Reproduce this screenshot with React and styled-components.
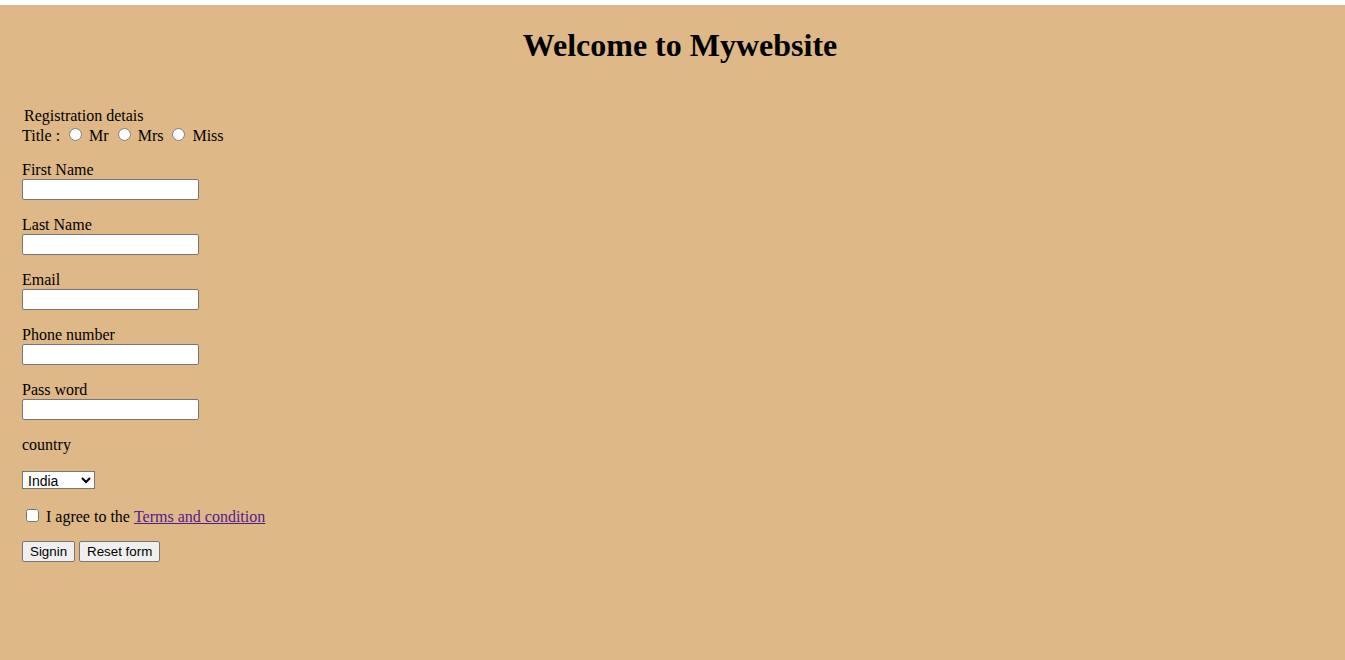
import React from "react";
import styled, { createGlobalStyle } from "styled-components";

const Global = createGlobalStyle`
  html, body {
    margin: 0;
    padding: 0;
    background: #ffffff;
  }
  body {
    font-family: "Liberation Serif", "Times New Roman", serif;
    font-size: 16px;
    color: #000;
  }
`;

const Page = styled.div`
  margin-top: 5px;
  min-height: 655px;
  background: #deb887;
  display: flex;
  flex-direction: column;
  padding: 0 7px 0 22px;
  box-sizing: border-box;
`;

const Heading = styled.h1`
  margin: 22px 0 0;
  font-size: 32px;
  line-height: 37px;
  font-weight: bold;
  text-align: center;
`;

const Form = styled.form`
  display: flex;
  flex-direction: column;
  align-items: flex-start;
  margin-top: 43px;
  line-height: 18px;
`;

const Legend = styled.div`
  padding-left: 2px;
  height: 18px;
`;

const TitleRow = styled.div`
  height: 20px;
  display: flex;
  align-items: baseline;
  white-space: pre;
`;

const Radio = styled.input.attrs({ type: "radio" })`
  width: 13px;
  height: 13px;
  margin: 3px 3px 0 5px;
`;

const Field = styled.div`
  margin-top: 16px;
  display: flex;
  flex-direction: column;
  align-items: flex-start;
`;

const Label = styled.label`
  height: 18px;
  line-height: 18px;
`;

const TextInput = styled.input`
  width: 177px;
  height: 21px;
  box-sizing: border-box;
  border: 1px solid #767676;
  border-radius: 2px;
  background: #fff;
  padding: 1px 2px;
  margin: 0;
  font-family: "Liberation Sans", Arial, sans-serif;
  font-size: 13.333px;
`;

const Plain = styled.div`
  margin-top: 16px;
  height: 18px;
`;

const Select = styled.select`
  margin-top: 17px;
  width: 73px;
  height: 18px;
  box-sizing: border-box;
  font-family: "Liberation Sans", Arial, sans-serif;
  font-size: 14px;
  border: 1px solid #767676;
  border-radius: 0;
  background: #fff;
  padding: 0 0 0 1px;
  color: #000;
`;

const AgreeRow = styled.div`
  margin-top: 17px;
  height: 18px;
  display: flex;
  align-items: baseline;
  white-space: pre;
`;

const Check = styled.input.attrs({ type: "checkbox" })`
  width: 13px;
  height: 13px;
  margin: 3px 3px 3px 4px;
`;

const Link = styled.a`
  color: #551a8b;
  text-decoration: underline;
`;

const Buttons = styled.div`
  margin-top: 17px;
  display: flex;
  gap: 4px;
`;

const Button = styled.button`
  height: 21px;
  box-sizing: border-box;
  font-family: "Liberation Sans", Arial, sans-serif;
  font-size: 13.333px;
  padding: 1px 7px;
  background: #efefef;
  border: 1px solid #767676;
  border-radius: 2px;
  color: #000;
`;

const fields = ["First Name", "Last Name", "Email", "Phone number", "Pass word"];

export default function App() {
  return (
    <>
      <Global />
      <Page>
        <Heading>Welcome to Mywebsite</Heading>
        <Form onSubmit={(e) => e.preventDefault()}>
          <Legend>Registration detais</Legend>
          <TitleRow>
            Title : <Radio name="title" /> Mr <Radio name="title" /> Mrs <Radio name="title" /> Miss
          </TitleRow>
          {fields.map((f) => (
            <Field key={f}>
              <Label>{f}</Label>
              <TextInput type={f === "Pass word" ? "password" : "text"} />
            </Field>
          ))}
          <Plain>country</Plain>
          <Select defaultValue="India">
            <option>India</option>
            <option>USA</option>
            <option>UK</option>
          </Select>
          <AgreeRow>
            <Check /> I agree to the <Link href="#">Terms and condition</Link>
          </AgreeRow>
          <Buttons>
            <Button type="submit">Signin</Button>
            <Button type="reset">Reset form</Button>
          </Buttons>
        </Form>
      </Page>
    </>
  );
}
